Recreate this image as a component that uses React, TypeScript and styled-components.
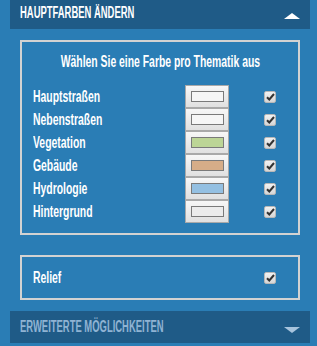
import React from "react";
import styled, { createGlobalStyle } from "styled-components";

const Global = createGlobalStyle`
  html, body { margin: 0; padding: 0; background: #2a7db5; }
  body { font-family: "Liberation Sans", Arial, sans-serif; }
`;

const Page = styled.div`
  width: 300px;
  margin-left: 10px;
  display: flex;
  flex-direction: column;
`;

const Header = styled.div<{ $muted?: boolean }>`
  height: ${(p) => (p.$muted ? 32 : 29)}px;
  background: #1f5b87;
  display: flex;
  align-items: center;
  justify-content: space-between;
  padding: 0 10px;
  box-sizing: border-box;
  color: ${(p) => (p.$muted ? "#8fb3d3" : "#ffffff")};
  font-size: 16px;
  line-height: 18px;
  font-weight: bold;
  text-transform: uppercase;
  margin-top: ${(p) => (p.$muted ? 11 : 0)}px;
  white-space: nowrap;
`;

const HeaderText = styled.span<{ $raise: number }>`
  display: inline-block;
  margin-bottom: ${(p) => p.$raise}px;
`;

/* Condensed lettering: the reference uses a narrow DIN-like face */
const Narrow = styled.span<{ $sx: number; $center?: boolean }>`
  display: inline-block;
  white-space: nowrap;
  transform: scaleX(${(p) => p.$sx});
  transform-origin: ${(p) => (p.$center ? "center" : "left")} center;
`;

const Arrow = styled.span<{ $down?: boolean; $color: string; $shift: number }>`
  width: 0;
  height: 0;
  flex: none;
  border-left: 8px solid transparent;
  border-right: 8px solid transparent;
  margin-top: ${(p) => p.$shift}px;
  ${(p) =>
    p.$down
      ? `border-top: 6px solid ${p.$color};`
      : `border-bottom: 6px solid ${p.$color};`}
`;

const Box = styled.div<{ $top: number }>`
  margin: ${(p) => p.$top}px 10px 0;
  border: 2px solid #d2d2d2;
  color: #fff;
  font-size: 16px;
  font-weight: bold;
`;

const Title = styled.div`
  display: flex;
  justify-content: center;
  padding-top: 11px;
  height: 43px;
  line-height: 18px;
  box-sizing: border-box;
`;

const Rows = styled.div`
  display: flex;
  flex-direction: column;
  padding: 0 22px 10px 11px;
`;

const Row = styled.div`
  display: grid;
  grid-template-columns: 1fr 44px 35px 12px;
  align-items: center;
  height: 23px;
`;

const Label = styled.span`
  line-height: 18px;
  min-width: 0;
`;

const ColorButton = styled.button`
  grid-column: 2;
  width: 44px;
  height: 23px;
  margin: 0;
  padding: 0;
  box-sizing: border-box;
  border: 1px solid #a9a9a9;
  background: linear-gradient(#f7f7f7, #e0e0e0);
  display: flex;
  align-items: center;
  justify-content: center;
`;

const Swatch = styled.span<{ $c: string }>`
  width: 33px;
  height: 11px;
  box-sizing: border-box;
  border: 1px solid #7a7a7a;
  background: ${(p) => p.$c};
`;

const Check = styled.span`
  grid-column: 4;
  width: 12px;
  height: 12px;
  box-sizing: border-box;
  border: 1px solid #b8b8b8;
  border-radius: 2px;
  background: linear-gradient(#f2f2f2, #d6d6d6);
  display: flex;
  align-items: center;
  justify-content: center;
`;

const CheckMark = () => (
  <svg width="9" height="8" viewBox="0 0 9 8">
    <path d="M1 4.2 L3.3 6.5 L8 1" fill="none" stroke="#333" strokeWidth="2" />
  </svg>
);

const ReliefRow = styled.div`
  display: grid;
  grid-template-columns: 1fr 12px;
  align-items: center;
  height: 41px;
  padding: 0 22px 0 11px;
`;

const items = [
  { name: "Hauptstraßen", c: "#f6f6f6" },
  { name: "Nebenstraßen", c: "#f6f6f6" },
  { name: "Vegetation", c: "#bcd596" },
  { name: "Gebäude", c: "#d6ad88" },
  { name: "Hydrologie", c: "#94c0e2" },
  { name: "Hintergrund", c: "#ececec" },
];

export default function App() {
  return (
    <Page>
      <Global />
      <Header>
        <HeaderText $raise={4}>
          <Narrow $sx={0.59}>Hauptfarben ändern</Narrow>
        </HeaderText>
        <Arrow $color="#ffffff" $shift={3} />
      </Header>
      <Box $top={11}>
        <Title>
          <Narrow $sx={0.65} $center>
            Wählen Sie eine Farbe pro Thematik aus
          </Narrow>
        </Title>
        <Rows>
          {items.map((it) => (
            <Row key={it.name}>
              <Label>
                <Narrow $sx={0.65}>{it.name}</Narrow>
              </Label>
              <ColorButton>
                <Swatch $c={it.c} />
              </ColorButton>
              <Check>
                <CheckMark />
              </Check>
            </Row>
          ))}
        </Rows>
      </Box>
      <Box $top={20}>
        <ReliefRow>
          <Label>
            <Narrow $sx={0.65}>Relief</Narrow>
          </Label>
          <Check>
            <CheckMark />
          </Check>
        </ReliefRow>
      </Box>
      <Header $muted>
        <HeaderText $raise={0}>
          <Narrow $sx={0.59}>Erweiterte Möglichkeiten</Narrow>
        </HeaderText>
        <Arrow $down $color="#a7c4dd" $shift={5} />
      </Header>
    </Page>
  );
}
